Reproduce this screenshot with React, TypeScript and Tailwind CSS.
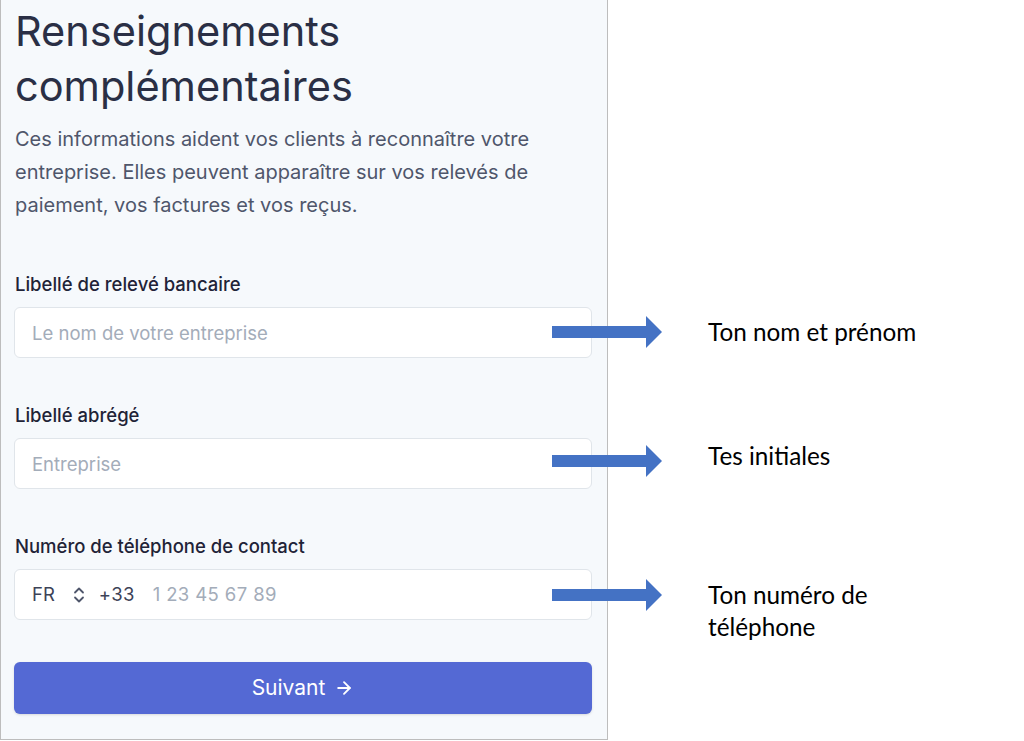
import { ArrowRight } from "lucide-react";

function Arrow({ top }: { top: string }) {
  return (
    <svg
      className={`absolute left-[552px] ${top}`}
      width="111"
      height="32"
      viewBox="0 0 111 32"
    >
      <polygon points="0,10 94,10 94,0 110,16 94,32 94,22 0,22" fill="#4472c4" />
    </svg>
  );
}

function Field({
  label,
  placeholder,
  top,
}: {
  label: string;
  placeholder: string;
  top: string;
}) {
  return (
    <div className={`flex flex-col ${top}`}>
      <label className="pl-[1px] text-[18.5px] leading-[24px] font-medium text-[#1f2337]">{label}</label>
      <input
        className="mt-[11px] h-[51px] w-full rounded-[6px] border border-[#e0e5ea] bg-white pl-[17px] text-[18.5px] text-[#3c4257] placeholder:text-[#a3acb9] outline-none"
        placeholder={placeholder}
      />
    </div>
  );
}

export default function App() {
  return (
    <div
      className="relative flex h-[741px] w-[1024px] bg-white"
      style={{ fontFamily: "Inter, 'Noto Sans', sans-serif" }}
    >
      <section className="flex h-[740px] w-[608px] flex-col border border-t-0 border-[#bdbdbd] bg-[#f6f9fc] pl-[13px] pr-[15px]">
        <h1 className="pt-[4px] pl-[1px] text-[41.5px] leading-[55px] font-normal text-[#2a2f45]">
          Renseignements
          <br />
          complémentaires
        </h1>
        <p className="mt-[9px] pl-[1px] text-[20px] leading-[33px] text-[#4f566b]">
          Ces informations aident vos clients à reconnaître votre entreprise. Elles peuvent apparaître sur vos
          relevés de paiement, vos factures et vos reçus.
        </p>

        <Field label="Libellé de relevé bancaire" placeholder="Le nom de votre entreprise" top="mt-[50px]" />
        <Field label="Libellé abrégé" placeholder="Entreprise" top="mt-[45px]" />

        <div className="mt-[45px] flex flex-col">
          <label className="pl-[1px] text-[18.5px] leading-[24px] font-medium text-[#1f2337]">
            Numéro de téléphone de contact
          </label>
          <div className="mt-[11px] flex h-[51px] w-full items-center rounded-[6px] border border-[#e0e5ea] bg-white pl-[17px] text-[18.5px]">
            <span className="text-[#3c4257]">FR</span>
            <svg className="ml-[18px]" width="12" height="18" viewBox="0 0 12 18" fill="none">
              <path d="M2 6.5 6 2.5 10 6.5M2 11.5 6 15.5 10 11.5" stroke="#4f566b" strokeWidth="1.8" strokeLinecap="round" strokeLinejoin="round" />
            </svg>
            <span className="ml-[14px] tracking-[0.3px] text-[#3c4257]">+33</span>
            <input
              className="ml-[18px] flex-1 bg-transparent text-[18.5px] tracking-[0.4px] placeholder:text-[#a3acb9] outline-none"
              placeholder="1 23 45 67 89"
            />
          </div>
        </div>

        <button className="mt-[42px] flex h-[52px] w-full items-center justify-center gap-[9px] rounded-[6px] bg-[#5469d4] text-[21px] text-white shadow-sm">
          Suivant
          <ArrowRight size={20} strokeWidth={2.2} />
        </button>
      </section>

      <Arrow top="top-[316px]" />
      <Arrow top="top-[445px]" />
      <Arrow top="top-[579px]" />

      <div
        className="absolute left-[708px] top-[316px] text-[24.3px] leading-[32px] text-black"
        style={{ fontFamily: "Lato, 'Noto Sans', sans-serif" }}
      >
        Ton nom et prénom
      </div>
      <div
        className="absolute left-[708px] top-[440px] text-[24.3px] leading-[32px] text-black"
        style={{ fontFamily: "Lato, 'Noto Sans', sans-serif" }}
      >
        Tes initiales
      </div>
      <div
        className="absolute left-[708px] top-[579px] text-[24.3px] leading-[32px] text-black"
        style={{ fontFamily: "Lato, 'Noto Sans', sans-serif" }}
      >
        Ton numéro de
        <br />
        téléphone
      </div>
    </div>
  );
}
